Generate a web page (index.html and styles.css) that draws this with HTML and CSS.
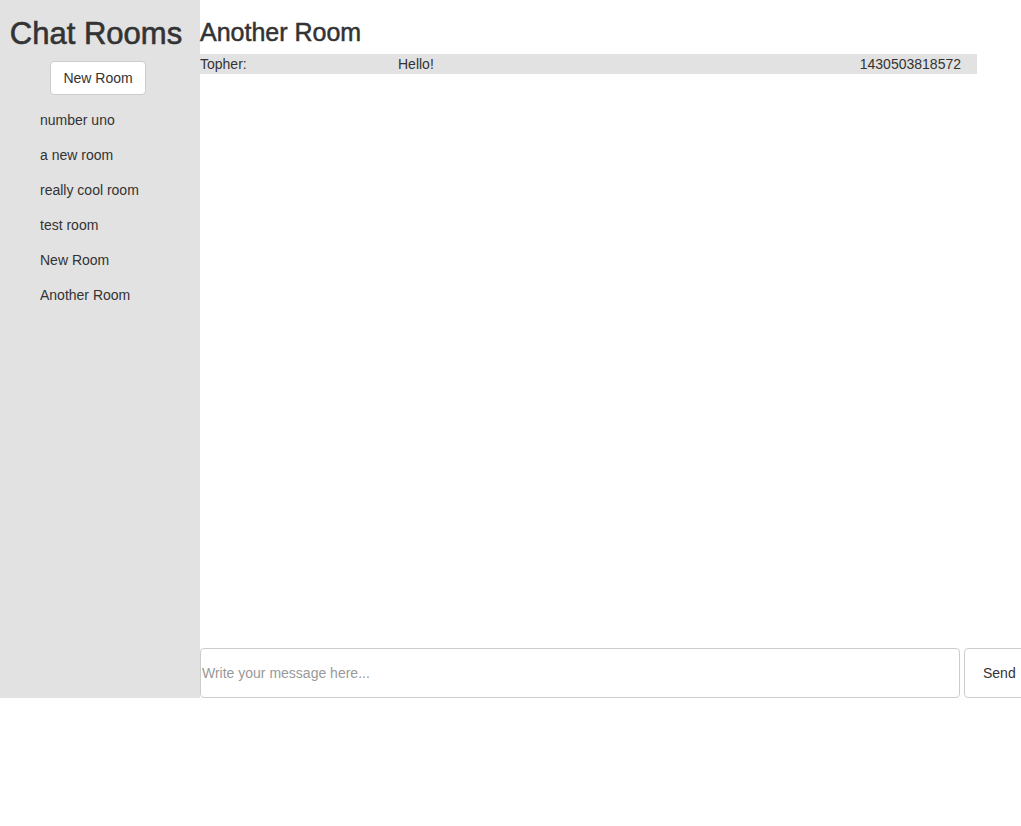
FILE: index.html
```html
<!DOCTYPE html>
<html>
<head>
<meta charset="utf-8">
<title>Chat Rooms</title>
<link rel="stylesheet" href="styles.css">
</head>
<body>
<div class="app">
  <aside class="sidebar">
    <h1 class="sidebar-title">Chat Rooms</h1>
    <div class="new-room-wrap"><button class="btn">New Room</button></div>
    <ul class="room-list">
      <li>number uno</li>
      <li>a new room</li>
      <li>really cool room</li>
      <li>test room</li>
      <li>New Room</li>
      <li>Another Room</li>
    </ul>
  </aside>
  <main class="main">
    <h3 class="room-title">Another Room</h3>
    <div class="messages">
      <div class="message">
        <span class="msg-user">Topher:</span>
        <span class="msg-text">Hello!</span>
        <span class="msg-time">1430503818572</span>
      </div>
    </div>
    <form class="composer">
      <input class="composer-input" type="text" placeholder="Write your message here...">
      <button class="btn send-btn" type="button">Send</button>
    </form>
  </main>
</div>
</body>
</html>
```
FILE: styles.css
```css
html, body {
  margin: 0;
  padding: 0;
  background: #fff;
  overflow: hidden;
}
body {
  font-family: "Liberation Sans", Arial, Helvetica, sans-serif;
  font-size: 14px;
  line-height: 20px;
  color: #333;
}
.app {
  display: flex;
  height: 698px;
  width: 1021px;
  overflow: hidden;
}
.sidebar {
  flex: 0 0 200px;
  background: #e2e2e2;
}
.sidebar-title {
  margin: 17px 0 10px;
  font-size: 31px;
  font-weight: 500;
  line-height: 34px;
  text-align: center;
  padding-right: 8px;
  -webkit-text-stroke: 0.6px #333;
}
.new-room-wrap {
  display: flex;
  justify-content: center;
  padding-right: 4px;
}
.btn {
  font-family: inherit;
  font-size: 14px;
  line-height: 20px;
  color: #333;
  background: #fff;
  border: 1px solid #ccc;
  border-radius: 4px;
  padding: 6px 12px;
  cursor: pointer;
}
.room-list {
  list-style: none;
  margin: 8px 0 0;
  padding: 0 0 0 40px;
}
.room-list li {
  line-height: 35px;
}
.main {
  flex: 1 1 auto;
  display: flex;
  flex-direction: column;
  min-width: 0;
}
.room-title {
  margin: 19px 0 9px;
  font-size: 25px;
  font-weight: 500;
  line-height: 26px;
  -webkit-text-stroke: 0.5px #333;
}
.messages {
  flex: 1 1 auto;
}
.message {
  display: grid;
  grid-template-columns: 198px 1fr auto;
  width: 777px;
  box-sizing: border-box;
  padding-right: 16px;
  background: #e2e2e2;
  line-height: 20px;
}
.composer {
  display: flex;
  gap: 4px;
  margin: 0;
  height: 50px;
}
.composer-input {
  flex: 0 0 760px;
  box-sizing: border-box;
  height: 50px;
  border: 1px solid #ccc;
  border-radius: 4px;
  padding: 0 1px;
  font-family: inherit;
  font-size: 14px;
  color: #333;
  outline: none;
}
.composer-input::placeholder {
  color: #999;
}
.send-btn {
  flex: 0 0 auto;
  height: 50px;
  padding: 0 18px;
}
```
